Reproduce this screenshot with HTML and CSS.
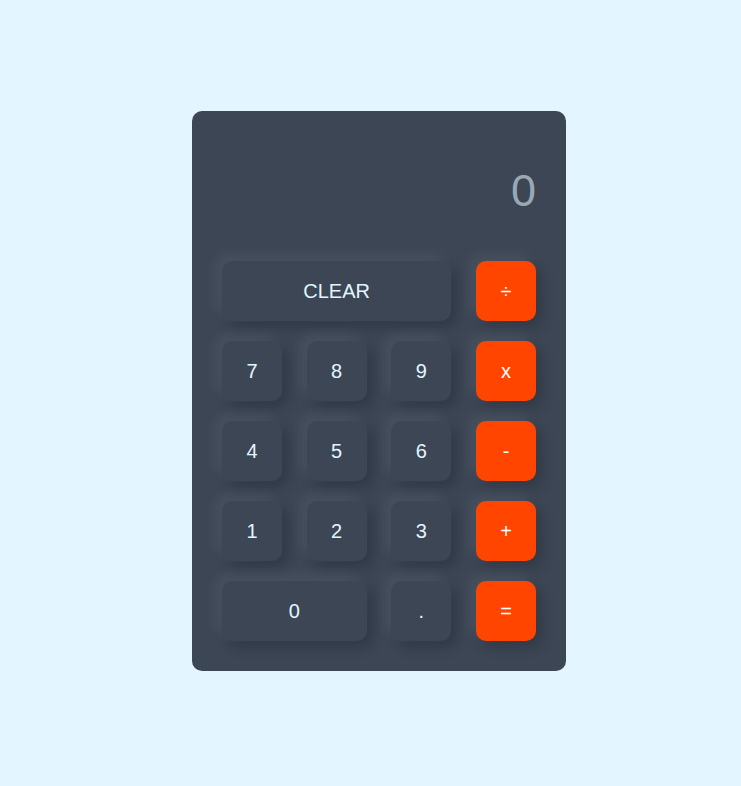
FILE: index.html
```html
<!DOCTYPE html>
<html>
<head>
<meta charset="utf-8">
<link rel="stylesheet" href="styles.css">
</head>
<body>
<div class="calculator">
  <div class="display">0</div>
  <div class="keys">
    <button class="key span3">CLEAR</button>
    <button class="key op">÷</button>
    <button class="key">7</button>
    <button class="key">8</button>
    <button class="key">9</button>
    <button class="key op">x</button>
    <button class="key">4</button>
    <button class="key">5</button>
    <button class="key">6</button>
    <button class="key op">-</button>
    <button class="key">1</button>
    <button class="key">2</button>
    <button class="key">3</button>
    <button class="key op">+</button>
    <button class="key span2">0</button>
    <button class="key">.</button>
    <button class="key op">=</button>
  </div>
</div>
</body>
</html>
```
FILE: styles.css
```css
html, body {
  margin: 0;
  padding: 0;
}
body {
  background: #e3f6ff;
  min-height: 786px;
  box-sizing: border-box;
  padding-left: 17px;
  padding-bottom: 4px;
  display: flex;
  align-items: center;
  justify-content: center;
  font-family: "Liberation Sans", Arial, sans-serif;
}
.calculator {
  width: 374px;
  box-sizing: border-box;
  padding: 30px;
  background: #3c4655;
  border-radius: 10px;
}
.display {
  height: 100px;
  margin-bottom: 20px;
  display: flex;
  align-items: center;
  justify-content: flex-end;
  font-size: 45px;
  color: #9aa8b3;
}
.keys {
  display: grid;
  grid-template-columns: repeat(4, 60px);
  grid-auto-rows: 60px;
  justify-content: space-between;
  row-gap: 20px;
}
.key {
  border: none;
  outline: none;
  border-radius: 10px;
  background: #3c4655;
  color: #e3f6ff;
  font-family: "Liberation Sans", Arial, sans-serif;
  font-size: 20px;
  padding: 0;
  box-shadow: -6px -6px 14px rgba(255, 255, 255, 0.07), 6px 6px 14px rgba(0, 0, 0, 0.2);
}
.key.op {
  background: #ff4500;
  color: #ffffff;
}
.span3 { grid-column: span 3; }
.span2 { grid-column: span 2; }
```
